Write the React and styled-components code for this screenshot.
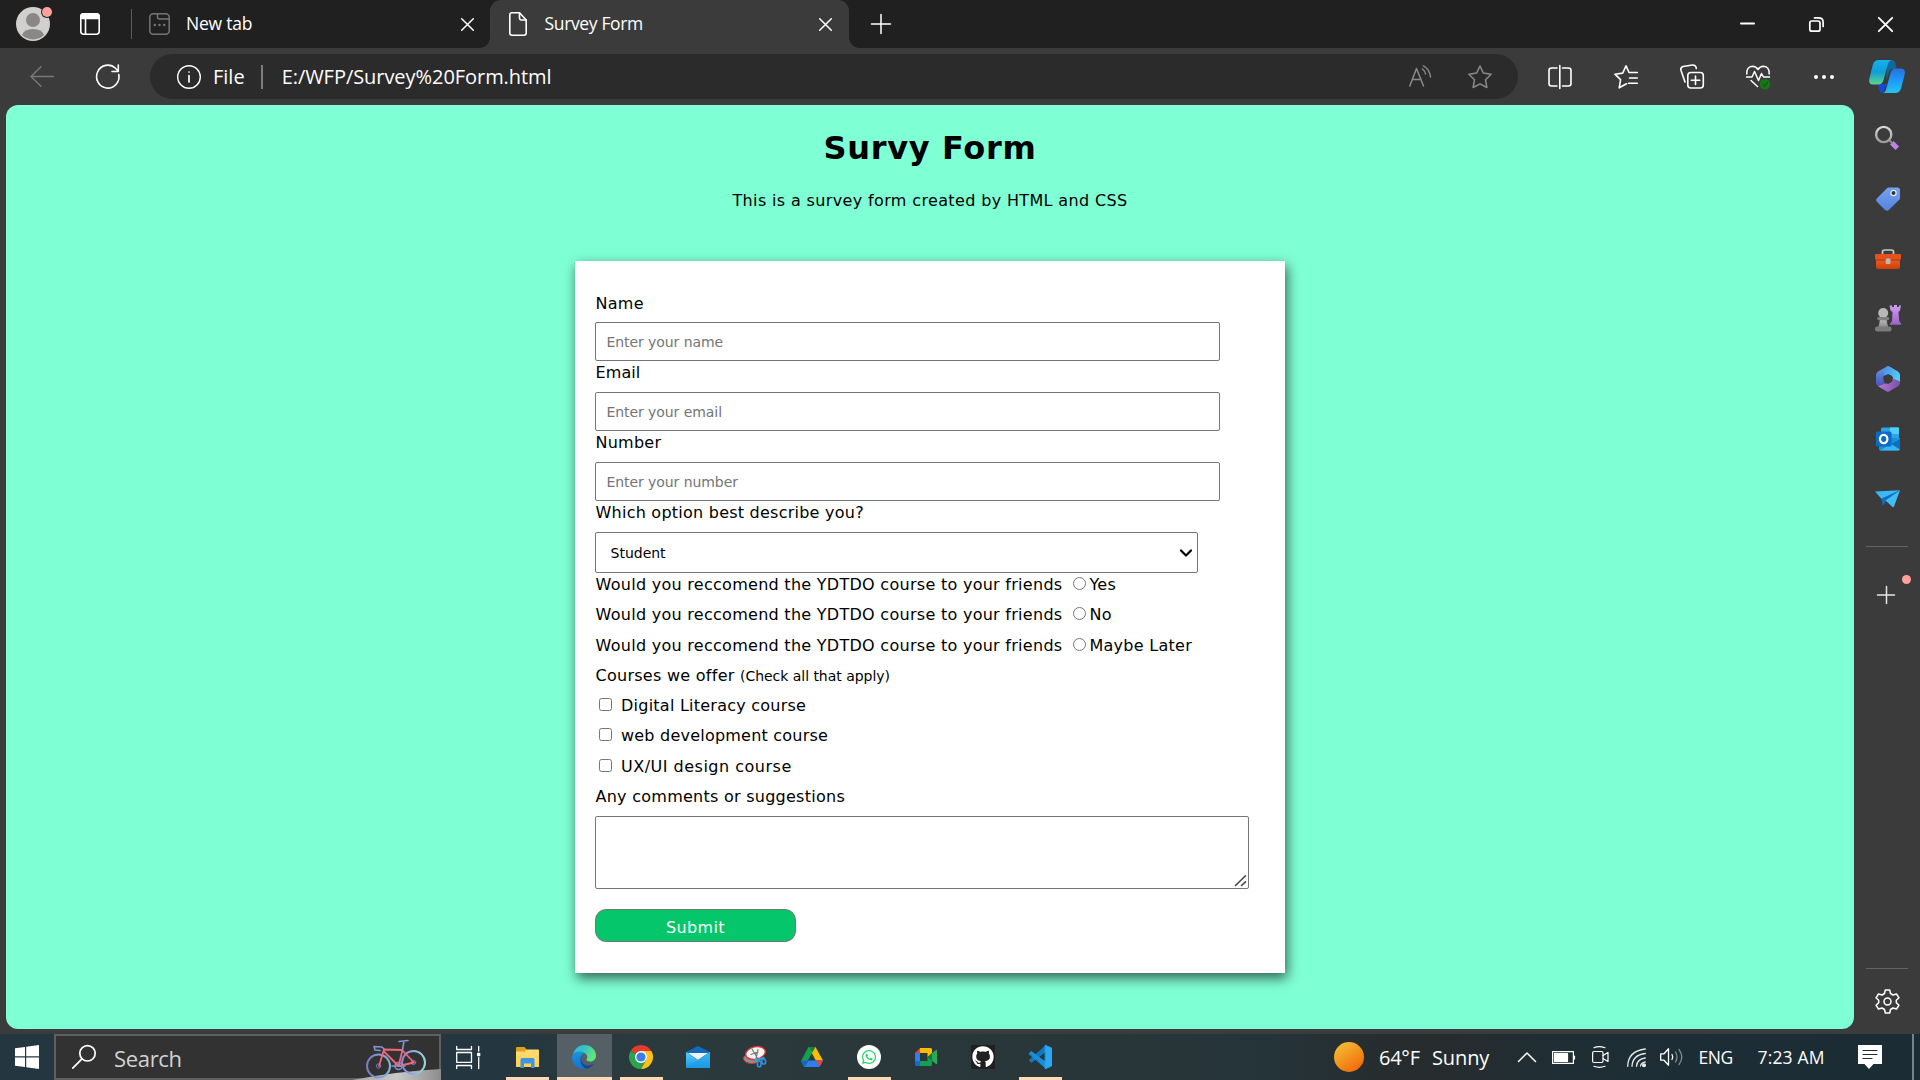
import React from "react";
import styled, { createGlobalStyle, css } from "styled-components";
import { FaGithub, FaWhatsapp } from "react-icons/fa";

const Global = createGlobalStyle`
  * { box-sizing: border-box; }
  body { margin: 0; background: #3b3b3b; overflow: hidden; }
`;

const UI = '"Open Sans", "Noto Sans", sans-serif';
const FORM = '"DejaVu Sans", sans-serif';

const Screen = styled.div`
  display: flex;
  flex-direction: column;
  width: 1920px;
  height: 1080px;
  background: #3b3b3b;
  font-family: ${UI};
  color: #fff;
`;
const Glyph = styled.svg`
  display: block;
  flex: none;
  width: ${(p) => p.$w}px;
  height: ${(p) => p.$h || p.$w}px;
  margin-left: ${(p) => p.$ml || 0}px;
  margin-top: ${(p) => p.$mt || 0}px;
  overflow: visible;
  fill: none;
  stroke-linecap: round;
  stroke-linejoin: round;
`;
const Txt = styled.span`
  flex: none;
  white-space: pre;
  width: ${(p) => (p.$w ? `${p.$w}px` : "auto")};
  font-size: ${(p) => p.$size}px;
  letter-spacing: ${(p) => p.$ls || 0}px;
  margin-left: ${(p) => p.$ml || 0}px;
  margin-top: ${(p) => p.$mt || 0}px;
  color: ${(p) => p.$c || "#fff"};
  line-height: 1.3;
`;
const Spacer = styled.div`
  flex: 1;
`;

/* ---------- tab strip ---------- */
const TabStrip = styled.div`
  display: flex;
  height: 48px;
  background: #202020;
`;
const StripTools = styled.div`
  display: flex;
  align-items: center;
  width: 132px;
  padding-left: 16px;
`;
const Divider = styled.div`
  flex: none;
  width: ${(p) => p.$w || 1}px;
  height: ${(p) => p.$h}px;
  background: ${(p) => p.$c};
  margin-left: ${(p) => p.$ml || 0}px;
`;
const Tab = styled.div`
  position: relative;
  display: flex;
  align-items: center;
  width: ${(p) => p.$w}px;
  padding: 0 16px 0 17px;
  ${(p) =>
    p.$active &&
    css`
      padding: 0 17px 0 19px;
      background: #3b3b3b;
      border-radius: 11px 11px 0 0;
      &::before,
      &::after {
        content: "";
        position: absolute;
        bottom: 0;
        width: 10px;
        height: 10px;
      }
      &::before {
        left: -10px;
        background: radial-gradient(circle at 0 0, #202020 9.5px, #3b3b3b 10px);
      }
      &::after {
        right: -10px;
        background: radial-gradient(circle at 100% 0, #202020 9.5px, #3b3b3b 10px);
      }
    `}
`;
const WindowButtons = styled.div`
  display: flex;
  align-items: center;
`;
const WinButton = styled.div`
  display: flex;
  justify-content: center;
  width: 69px;
`;

/* ---------- toolbar ---------- */
const Toolbar = styled.div`
  display: flex;
  align-items: center;
  height: 57px;
  padding-left: 30px;
`;
const Address = styled.div`
  display: flex;
  align-items: center;
  width: 1368px;
  height: 45px;
  margin-left: 30px;
  padding: 0 26px 0 27px;
  border-radius: 23px;
  background: #2b2b2b;
`;

/* ---------- body ---------- */
const Body = styled.div`
  display: flex;
  height: 929px;
  padding: 0 0 0 6px;
`;
const Page = styled.main`
  display: flex;
  flex-direction: column;
  align-items: center;
  width: 1848px;
  height: 924px;
  border-radius: 12px;
  background: #7fffd4;
  color: #000;
  font-family: ${FORM};
`;
const Title = styled.h1`
  margin: 24px 0 0;
  font-size: 32px;
  line-height: 38px;
  letter-spacing: 0.7px;
`;
const Intro = styled.p`
  margin: 24px 0 0;
  font-size: 16px;
  line-height: 20px;
  letter-spacing: 0.36px;
`;
const Card = styled.form`
  display: flex;
  flex-direction: column;
  align-items: flex-start;
  width: 710px;
  height: 712px;
  margin-top: 50px;
  padding: 31px 20px 0;
  background: #fff;
  box-shadow: 2px 5px 12px rgba(0, 0, 0, 0.62);
`;
const Label = styled.label`
  padding-bottom: ${(p) => p.$gap || 8}px;
  padding-left: 0.5px;
  font-size: 16px;
  line-height: 23px;
  letter-spacing: ${(p) => p.$ls || 0.25}px;
`;
const Field = styled.input`
  width: 625px;
  height: 39px;
  padding: 0 10.5px;
  border: 1px solid #767676;
  border-radius: 2px;
  font: 14px ${FORM};
  letter-spacing: -0.07px;
  &::placeholder {
    color: #757575;
  }
`;
const Overlaid = styled.div`
  position: relative;
  display: flex;
`;
const Caret = styled(Glyph)`
  position: absolute;
  right: 6.5px;
  top: 18px;
`;
const Grip = styled(Glyph)`
  position: absolute;
  right: 3px;
  bottom: 3px;
`;
const Choice = styled.select`
  width: 603px;
  height: 41px;
  padding: 0 4px 0 14.5px;
  appearance: none;
  border: 1px solid #767676;
  border-radius: 2px;
  background: #fff;
  color: #000;
  font: 14px ${FORM};
`;
const Row = styled.div`
  display: flex;
  height: 30.25px;
  padding-left: 0.5px;
  font-size: 16px;
  line-height: 23.5px;
  letter-spacing: ${(p) => p.$ls || 0.28}px;
  white-space: pre;
`;
const Hint = styled.span`
  font-size: 14px;
  letter-spacing: -0.03px;
  padding-top: 1px;
`;
const Radio = styled.input`
  width: 13px;
  height: 13px;
  margin: 4px 3px 0 11px;
`;
const Check = styled.input`
  width: 13px;
  height: 13px;
  margin: 4px 9px 0 3.5px;
`;
const Comments = styled.textarea`
  width: 654px;
  height: 73px;
  margin-top: 1px;
  border: 1px solid #767676;
  border-radius: 2px;
  resize: none;
`;
const Submit = styled.button`
  width: 201px;
  height: 33px;
  margin-top: 20px;
  padding: 3px 0 0;
  border: 1px solid #767676;
  border-radius: 11px;
  background: #06c66b;
  color: #fff;
  font: 16px ${FORM};
  letter-spacing: 0.35px;
`;

const Sidebar = styled.aside`
  display: flex;
  flex-direction: column;
  width: 66px;
  padding-left: 12px;
`;
const Rule = styled.div`
  flex: none;
  width: 42px;
  height: 1px;
  margin-top: ${(p) => p.$mt}px;
  background: #636363;
`;

/* ---------- taskbar ---------- */
const Taskbar = styled.footer`
  display: flex;
  align-items: center;
  height: 46px;
  background: linear-gradient(90deg, #24363f 0, #24363f 500px, #2b3a3d 640px, #293639 1100px, #25343a 1270px, #262e30 1360px, #272c2d 1430px, #1f2e35 1560px, #1b2c35 1920px);
`;
const Start = styled.div`
  display: flex;
  align-items: center;
  justify-content: center;
  width: 54px;
`;
const SearchBox = styled.div`
  display: flex;
  align-items: center;
  width: 387px;
  height: 46px;
  padding-left: 16px;
  border: 2px solid #5f5f5f;
  background: #323232;
`;
const Apps = styled.div`
  display: flex;
  gap: 2px;
  margin-left: 20px;
`;
const AppCell = styled.div`
  display: flex;
  flex-direction: column;
  align-items: center;
  width: 55px;
  height: 46px;
  background: ${(p) => (p.$active ? "#546066" : "transparent")};
`;
const AppIcon = styled.div`
  display: flex;
  align-items: center;
  justify-content: center;
  height: 43px;
  padding: 3px 1px 0 0;
`;
const Underline = styled.div`
  width: ${(p) => p.$w}px;
  height: 3px;
  background: #ffd9b3;
`;
const GithubTile = styled.div`
  display: flex;
  width: 24px;
  height: 24px;
  align-items: center;
  justify-content: center;
  background: #211f1f;
`;
const WhatsTile = styled(GithubTile)`
  border-radius: 50%;
  background: #fff;
  color: #25d366;
`;
const Tray = styled.div`
  display: flex;
  align-items: center;
  width: 586px;
  height: 46px;
`;

const X = ({ s = 13, w = 1.5 }) => (
  <Glyph $w={s} $mt={1} viewBox="0 0 13 13" stroke="#fff" strokeWidth={w}>
    <path d="M.7 .7 12.3 12.3M12.3 .7 .7 12.3" />
  </Glyph>
);

const Grad = ({ id, a, b, c, x = 0, y = 1 }) => (
  <linearGradient id={id} x1="0" y1="0" x2={x} y2={y}>
    <stop stopColor={a} />
    {c && <stop offset=".5" stopColor={c} />}
    <stop offset="1" stopColor={b} />
  </linearGradient>
);

const Bike = () => (
  <Glyph $w={91} $h={42} viewBox="348 1036 91 42">
    <defs>
      <Grad id="w1" x={1} y={0} a="#8079c8" b="#83b7d8" />
      <Grad id="w2" x={1} y={0} a="#8a87d2" b="#96d8df" />
      <Grad id="hill" x={1} y={0} a="#a5a5a5" c="#c9c9c9" b="#8d8d8d" />
    </defs>
    <path d="M352 1080Q400 1071 441 1069V1080Z" fill="url(#hill)" />
    <circle cx="378.500" cy="1066" r="11.500" stroke="url(#w1)" strokeWidth="2" />
    <circle cx="413.500" cy="1062.500" r="11.500" stroke="url(#w2)" strokeWidth="2" />
    <circle cx="378.500" cy="1066" r="2.200" stroke="#7276b8" />
    <circle cx="413.500" cy="1062.500" r="2.200" stroke="#7276b8" />
    <circle cx="398.500" cy="1066" r="3.500" stroke="#7d8bc8" strokeWidth="1.500" />
    <path d="M379 1066 384 1049.500M384.500 1052 398.500 1066 414 1062.500 402 1050 384 1049.500M398.500 1066 402.500 1050" stroke="#f2667a" strokeWidth="1.800" />
    <path d="M402.500 1050 404 1041M399 1041.500 408 1040.500M384 1049 382 1047 374 1046.500 375 1050 380 1050.500M392 1066H405" stroke="#8a93cf" strokeWidth="1.600" />
  </Glyph>
);

const Explorer = () => (
  <Glyph $w={23} $h={21} viewBox="0 0 23 21">
    <defs><Grad id="ex" a="#ffdd73" b="#ffcf52" /></defs>
    <path d="M0 1Q0 0 1 0H8.500L11 3 8 5H0Z" fill="#e0a11b" />
    <path d="M0 4.500H8.500L10.500 2.500H22Q23 2.500 23 3.500V20H0Z" fill="url(#ex)" />
    <path d="M4.500 21V12.500Q4.500 11 6 11H17Q18.500 11 18.500 12.500V21H15V16.500H8V21Z" fill="#3c97e0" />
  </Glyph>
);
const EdgeLogo = () => (
  <Glyph $w={24} viewBox="0 0 24 24">
    <defs>
      <Grad id="e1" x={1} y={0.4} a="#2fb6ec" c="#35c4c0" b="#62e578" />
      <Grad id="e2" a="#1b93dc" b="#1573cf" />
    </defs>
    <path d="M1 11C1.500 4.500 6.500 0 12.300 0 19 0 24 5 24 10.500 24 14.500 21 16.500 18 16.500 15.500 16.500 14.300 15.500 14.300 14.800 14.300 14 15.300 13.800 15.300 12 15.300 9.500 12.500 7 8.500 7 4.500 7 1.500 9 1 11Z" fill="url(#e1)" />
    <path d="M9.500 11C8 15.500 11 20.500 16 20.500 19 20.500 21 19.300 22.300 18.300 20 22 16.500 24 12.500 24 9 23.500 7 19 7.300 15.500 7.500 13 8.500 12 9.500 11Z" fill="#114a93" />
    <path d="M0 12C.5 8.500 4 6.500 7.500 6.500 10.500 6.500 13 7.800 13.500 8.500 10 8 8.500 10.500 8.500 14 8.500 19 11 22.500 14.500 23.700 9 24.800 5 23 2.500 19.500 .8 17.500 -.2 15 0 12Z" fill="url(#e2)" />
  </Glyph>
);
const Chrome = () => (
  <Glyph $w={24} viewBox="0 0 24 24">
    <path d="M12 12 1.600 6A12 12 0 0 1 22.400 6Z" fill="#e33b2e" />
    <path d="M1.600 6A12 12 0 0 0 12 24L17.200 15 12 12Z" fill="#2ba24c" />
    <path d="M12 6H22.400A12 12 0 0 1 12 24L17.200 15Z" fill="#fbc116" />
    <circle cx="12" cy="12" r="6" fill="#fff" />
    <circle cx="12" cy="12" r="4.600" fill="#3b7de9" />
  </Glyph>
);
const Mail = () => (
  <Glyph $w={24} $h={22} viewBox="0 0 24 22">
    <defs><Grad id="ml" a="#5bd0fa" b="#1a97e3" /></defs>
    <path d="M0 6 12 0 24 6V10H0Z" fill="#0f6cbd" />
    <path d="M2 7H22L12 14Z" fill="#f1f1f1" />
    <path d="M0 6 12 14 24 6V22H0Z" fill="url(#ml)" />
    <path d="M0 22 12 14 24 6V22Z" fill="#1b9be6" opacity=".5" />
  </Glyph>
);
const Snip = () => (
  <Glyph $w={24} $h={22} viewBox="0 0 24 22">
    <ellipse cx="9" cy="12.500" rx="8.500" ry="5" fill="#8f8f8f" stroke="#cf3a3a" />
    <ellipse cx="12.500" cy="7" rx="10" ry="6.200" fill="#f4f4f4" stroke="#d93535" strokeWidth="1.400" transform="rotate(-12 12.500 7)" />
    <path d="M9 3 15 13M15 3.500 13 13M8 8.500 15 6" stroke="#777" strokeWidth="1.200" />
    <path d="M12 14 17 13 21 12" stroke="#3c96d8" strokeWidth="2" />
    <ellipse cx="16.200" cy="18" rx="1.800" ry="3" stroke="#2f8fd8" strokeWidth="1.700" />
    <ellipse cx="20.700" cy="15.500" rx="2" ry="2.500" stroke="#2f8fd8" strokeWidth="1.700" />
  </Glyph>
);
const Drive = () => (
  <Glyph $w={22} $h={20} viewBox="0 0 22 20">
    <path d="M7.500 0 11 6 3.500 20Q3 20 2.500 19L0 14Z" fill="#13a050" />
    <path d="M7.500 0H14.500L22 13.500H14.800Z" fill="#fbbc09" />
    <path d="M7.300 13.500H22L19 19Q18.500 20 17.500 20H3.500Z" fill="#2f7df0" />
    <path d="M14.800 13.500H22L18.800 19.500Z" fill="#e94335" />
    <path d="M7.300 13.500H0L3.200 19.500Z" fill="#1a62cf" />
    <path d="M7.500 0H14.500L11 6Z" fill="#0d8539" />
  </Glyph>
);
const Meet = () => (
  <Glyph $w={22} $h={18} viewBox="0 0 22 18">
    <path d="M5 0V5H0Z" fill="#e94335" />
    <path d="M0 5H5V13H0Z" fill="#2f7df0" />
    <path d="M0 13H5V18H1.500Q0 18 0 16.500Z" fill="#1a66d6" />
    <path d="M5 0H15.500Q17 0 17 1.500V6.500L12.500 9V5H5Z" fill="#fbbc09" />
    <path d="M5 13H12.500V9L17 11.500V16.500Q17 18 15.500 18H5Z" fill="#13a050" />
    <path d="M12.500 9 21 2Q22 1.500 22 2.500V15.500Q22 16.500 21 16Z" fill="#2aa952" />
    <path d="M12.500 9 17 5V13Z" fill="#0d7a35" />
  </Glyph>
);
const Code = () => (
  <Glyph $w={24} viewBox="0 0 24 24">
    <path d="M18 .5 1.200 15.200 3.300 17.500 18.500 6Z" fill="#1277bd" stroke="#1277bd" />
    <path d="M1.200 8.500 3.300 6.500 18.500 17.800V23.500Z" fill="#188fda" stroke="#188fda" />
    <path d="M17.500 .5 23.500 3V21L17.500 23.500Z" fill="#29a8f3" stroke="#29a8f3" />
  </Glyph>
);

const apps = [
  { id: "files", icon: <Explorer />, line: 43 },
  { id: "edge", icon: <EdgeLogo />, line: 55, active: true },
  { id: "chrome", icon: <Chrome />, line: 43 },
  { id: "mail", icon: <Mail /> },
  { id: "snip", icon: <Snip /> },
  { id: "drive", icon: <Drive /> },
  { id: "whatsapp", icon: <WhatsTile><FaWhatsapp size={16} /></WhatsTile>, line: 43 },
  { id: "meet", icon: <Meet /> },
  { id: "github", icon: <GithubTile><FaGithub size={22} /></GithubTile> },
  { id: "code", icon: <Code />, line: 43 },
];
const questions = ["Yes", "No", "Maybe Later"];
const courses = [
  { name: "Digital Literacy course", ls: 0.24 },
  { name: "web development course", ls: 0.22 },
  { name: "UX/UI design course", ls: 0.5 },
];

export default function App() {
  return (
    <Screen>
      <Global />
      <TabStrip>
        <StripTools>
          <Glyph $w={34} viewBox="0 0 34 34">
            <circle cx="17" cy="17" r="17" fill="#d2d0ce" />
            <circle cx="17" cy="13" r="7" fill="#8a8886" />
            <path d="M6 28Q8 22 17 22T28 28A16 16 0 0 1 6 28Z" fill="#8a8886" />
            <circle cx="31" cy="5" r="6" fill="#202020" />
            <circle cx="31" cy="5" r="5" fill="#ffa29b" />
          </Glyph>
          <Glyph $w={20} $h={22} $ml={30} viewBox="0 0 20 22" stroke="#fff" strokeWidth="1.600">
            <rect x=".8" y=".8" width="18.400" height="20.400" rx="3" />
            <path d="M1 5.500V3Q1 1 3 1H17Q19 1 19 3V5.500Z" fill="#fff" />
            <path d="M5.500 6V21" />
          </Glyph>
          <Divider $h={30} $c="#5a5a5a" $ml={31} />
        </StripTools>
        <Tab $w={358}>
          <Glyph $w={21} $h={22} viewBox="0 0 21 22" stroke="#757575" strokeWidth="1.500">
            <rect x=".8" y=".8" width="19.400" height="20.400" rx="3.500" />
            <path d="M8.500 1V4Q8.500 6 10.500 6H20" />
            <path d="M5.800 12h.01M10.500 12h.01M15.200 12h.01" strokeWidth="2.400" />
          </Glyph>
          <Txt $size={17.5} $ml={16} $mt={-2} $ls={-0.22}>New tab</Txt>
          <Spacer />
          <X />
        </Tab>
        <Tab $w={359} $active>
          <Glyph $w={18} $h={24} viewBox="0 0 18 24" stroke="#fff" strokeWidth="1.600">
            <path d="M10.500 .8H3Q.8 .8 .8 3V21Q.8 23.200 3 23.200H15Q17.200 23.200 17.200 21V8Z" />
            <path d="M10.500 1V6Q10.500 8 12.500 8H17" />
          </Glyph>
          <Txt $size={17.5} $ml={17.5} $mt={-2} $ls={-0.35}>Survey Form</Txt>
          <Spacer />
          <X />
        </Tab>
        <WindowButtons>
          <Glyph $w={20} $ml={22} viewBox="0 0 20 20" stroke="#fff" strokeWidth="1.500">
            <path d="M10 .5V19.500M.5 10H19.500" />
          </Glyph>
        </WindowButtons>
        <Spacer />
        <WindowButtons>
          <WinButton>
            <Glyph $w={15} viewBox="0 0 15 15" stroke="#fff" strokeWidth="2">
              <path d="M1 6.500H14" />
            </Glyph>
          </WinButton>
          <WinButton>
            <Glyph $w={15} viewBox="0 0 15 15" stroke="#fff" strokeWidth="1.700">
              <rect x=".8" y="4" width="10.200" height="10.200" rx="2" />
              <path d="M5.500 .9H9.500Q14.100 .9 14.100 5V9.500" />
            </Glyph>
          </WinButton>
          <WinButton><X s={15} w={1.6} /></WinButton>
        </WindowButtons>
      </TabStrip>

      <Toolbar>
        <Glyph $w={24} $h={21} $mt={-1} viewBox="0 0 24 21" stroke="#777" strokeWidth="1.500">
          <path d="M23.500 10.500H1M11 .8 1 10.500 11 20.200" />
        </Glyph>
        <Glyph $w={24} $h={25} $ml={42} viewBox="0 0 24 25" stroke="#fff" strokeWidth="1.600">
          <path d="M22.800 10.500A11.200 11.500 0 1 1 19.500 4.300L22 7M22.300 1V7.500H16" />
        </Glyph>
        <Address>
          <Glyph $w={24} viewBox="0 0 24 24" stroke="#fff" strokeWidth="1.400">
            <circle cx="12" cy="12" r="11.300" />
            <path d="M12 10.500V17M12 7h.01" strokeWidth="1.700" />
          </Glyph>
          <Txt $size={20} $ml={12}>File</Txt>
          <Divider $w={2} $h={24} $c="#7d7d7d" $ml={16} />
          <Txt $size={20} $ml={19} $ls={-0.05}>E:/WFP/Survey%20Form.html</Txt>
          <Spacer />
          <Glyph $w={22} $mt={-2} viewBox="0 0 22 22" stroke="#8a8a8a" strokeWidth="1.500">
            <path d="M.8 21 7.500 3.500 14.500 21M3.500 14.500H11.800M13.500 4Q16 6 16.500 9M14.500 .8Q20.500 4 21.500 12" />
          </Glyph>
          <Glyph $w={24} $ml={37} viewBox="0 0 24 24" stroke="#8a8a8a" strokeWidth="1.500">
            <path d="M12 1 15.400 8.100 23.200 9.200 17.500 14.700 18.900 22.500 12 18.800 5.100 22.500 6.500 14.700 .8 9.200 8.600 8.100Z" />
          </Glyph>
        </Address>
        <Glyph $w={24} $ml={29.5} viewBox="0 0 24 24" stroke="#fff" strokeWidth="1.600">
          <path d="M9 3H3.500Q1 3 1 5.500V18.500Q1 21 3.500 21H9M14.500 3H20.500Q23 3 23 5.500V18.500Q23 21 20.500 21H14.500M11.800 .5V23.500" />
        </Glyph>
        <Glyph $w={24} $ml={42.5} viewBox="0 0 24 24" stroke="#fff" strokeWidth="1.600">
          <path d="M12.500 18.800 5.200 22.800 6.600 14.700 .9 9.200 8.700 8.100 12 .9 15 7.500H23.300M15.500 13H23.300M14.500 18.300H23.300" />
        </Glyph>
        <Glyph $w={24} $h={25} $ml={42} viewBox="0 0 24 25" stroke="#fff" strokeWidth="1.600">
          <rect x="7.800" y="8.500" width="15.500" height="15.500" rx="3" />
          <path d="M15.500 12V20.500M11.300 16.200H19.800M5 18 1 6.500Q.2 3.500 3 2.500L12.500 1Q15 .8 16 3L16.300 4.500" />
        </Glyph>
        <Glyph $w={24} $h={24} $ml={42} viewBox="0 0 24 24" stroke="#fff" strokeWidth="1.500">
          <path d="M.8 9Q.5 1.500 6.500 1.300 10 1.300 12 4.500 14 1.300 17.500 1.300 23.500 1.500 23.200 9M.5 12H6L8.500 6.500 12.500 15.500 15.500 8.500 17.500 12H23.500M5 15.500 11.500 21.500" />
          <circle cx="19" cy="19.200" r="5.300" fill="#0f7b0f" stroke="none" />
          <path d="M16.800 19.500 18.400 21 21.500 17.500" stroke="#3b3b3b" strokeWidth="1.200" />
        </Glyph>
        <Glyph $w={20} $h={4} $ml={44} viewBox="0 0 20 4">
          <circle cx="2" cy="2" r="2" fill="#fff" />
          <circle cx="10" cy="2" r="2" fill="#fff" />
          <circle cx="18" cy="2" r="2" fill="#fff" />
        </Glyph>
        <Glyph $w={36} $h={33} $ml={35} viewBox="0 0 36 33">
          <defs>
            <Grad id="c1" a="#16b1ea" c="#0f9fd8" b="#5fd58c" />
            <Grad id="c2" a="#2a6fdc" c="#1b9bff" b="#25c4ea" />
          </defs>
          <path d="M18 0H22Q25.500 0 26.500 4L27.500 9H24Q21 9 20 12L17.500 20Z" fill="#0d6a9c" />
          <path d="M9 24H18L14 33H14.500Q11 33 10 29Z" fill="#1648d8" />
          <path d="M10 0H23Q20 0 18.700 5L14.500 20Q13.300 24.500 9 24.500H4Q-1 24.500 .4 18.500L3.800 5Q5 0 10 0Z" fill="url(#c1)" />
          <path d="M26 33H13.500Q16.500 33 17.500 28L21.500 13Q22.700 8.500 27 8.500H32Q37 8.500 35.600 14.500L32.200 28Q31 33 26 33Z" fill="url(#c2)" />
        </Glyph>
      </Toolbar>

      <Body>
        <Page>
          <Title>Survy Form</Title>
          <Intro>This is a survey form created by HTML and CSS</Intro>
          <Card>
            <Label $gap={7} $ls={0.3}>Name</Label>
            <Field placeholder="Enter your name" />
            <Label $ls={0.1}>Email</Label>
            <Field placeholder="Enter your email" />
            <Label $ls={0.25}>Number</Label>
            <Field placeholder="Enter your number" />
            <Label $ls={0.24}>Which option best describe you?</Label>
            <Overlaid>
              <Choice><option>Student</option></Choice>
              <Caret $w={12} $h={6} viewBox="0 0 12 6" stroke="#000" strokeWidth="2.200">
                <path d="M1 .5 6 5.500 11 .5" />
              </Caret>
            </Overlaid>
            {questions.map((q) => (
              <Row key={q}>
                Would you reccomend the YDTDO course to your friends
                <Radio type="radio" name="recommend" />
                {q}
              </Row>
            ))}
            <Row $ls={0.27}>{"Courses we offer "}<Hint>(Check all that apply)</Hint></Row>
            {courses.map((c) => (
              <Row key={c.name} $ls={c.ls}><Check type="checkbox" />{c.name}</Row>
            ))}
            <Row $ls={0.26}>Any comments or suggestions</Row>
            <Overlaid>
              <Comments />
              <Grip $w={12} $h={11} viewBox="0 0 12 11" stroke="#444" strokeWidth="1.600">
                <path d="M1.500 10.500 11.500 .8M7.500 10.500 11.500 6.800" />
              </Grip>
            </Overlaid>
            <Submit type="button">Submit</Submit>
          </Card>
        </Page>

        <Sidebar>
          <Glyph $w={24} $ml={9} $mt={21} viewBox="0 0 24 24">
            <defs><Grad id="s1" a="#d8d8d8" b="#9b9b9b" /></defs>
            <path d="M16.800 16.800 22.300 22.300" stroke="#bd84e8" strokeWidth="5" strokeLinecap="butt" />
            <path d="M14.500 14.500 16.500 16.500" stroke="#8d8d8d" strokeWidth="2" />
            <circle cx="8.700" cy="8.500" r="7.600" stroke="url(#s1)" strokeWidth="2.400" />
          </Glyph>
          <Glyph $w={24} $ml={10} $mt={37} viewBox="0 0 24 24">
            <defs><Grad id="s2" a="#76a3ee" b="#5583dd" /></defs>
            <path d="M12.500 .5H21.500Q24 .5 24 3V12L12.500 23.200Q10.700 24.500 9 23L.8 14.800Q-.5 13 .8 11.500L11 1.200Z" fill="url(#s2)" />
            <circle cx="17.500" cy="6" r="2.600" fill="#333" stroke="#dbe8ff" strokeWidth="1.300" />
          </Glyph>
          <Glyph $w={26} $h={20} $ml={9} $mt={38} viewBox="0 0 26 20">
            <defs><Grad id="s3" a="#f1622a" b="#d13d06" /></defs>
            <path d="M7.500 6V3Q7.500 1 9.500 1H16.500Q18.500 1 18.500 3V6" stroke="#c9c9c9" strokeWidth="1.700" />
            <path d="M1 9H25V18Q25 20 23 20H3Q1 20 1 18Z" fill="url(#s3)" />
            <path d="M0 6Q0 5 1 5H25Q26 5 26 6V9.500Q26 10.500 25 10.500H1Q0 10.500 0 9.500Z" fill="#e5501b" />
            <path d="M1 11H25" stroke="#b53405" />
            <rect x="10.700" y="9.500" width="4.800" height="5.500" rx="1" fill="#b9b9b9" />
          </Glyph>
          <Glyph $w={26} $h={27} $ml={9} $mt={36} viewBox="0 0 26 27">
            <defs>
              <Grad id="s4" a="#c9c9c9" b="#8c8c8c" />
              <Grad id="s5" a="#cf9df0" b="#9b62c9" />
            </defs>
            <path d="M14.500 .5H17V2H19V0H22V2H24V.5H26L25 5.500 23.500 7 24.200 16 26 18.500V19.800H14.500L17 16 17.500 7 15.500 5.500Z" fill="url(#s5)" />
            <path d="M5.500 12H11L13 22H3.500Z" fill="url(#s4)" />
            <circle cx="8.200" cy="8" r="5" fill="#b8b8b8" />
            <rect x="2.200" y="12" width="12" height="3.200" rx="1.600" fill="#818181" />
            <rect x="0" y="21.500" width="16.500" height="5" rx="2" fill="#7c7c7c" />
          </Glyph>
          <Glyph $w={24} $h={26} $ml={10} $mt={34} viewBox="0 0 24 26">
            <defs>
              <Grad id="m1" a="#6b9be8" b="#4b52b8" />
              <Grad id="m2" x={1} y={0.5} a="#4b8de8" b="#53ccf5" />
              <Grad id="m3" x={1} y={0} a="#b878d8" b="#7b4fa8" />
            </defs>
            <path d="M12 0 2 5.500Q0 7 0 9V17Q0 19 2 20.200L9 17.500Q7.500 16 7.500 13V10L15 6V1.500Z" fill="url(#m1)" />
            <path d="M12 0Q13.500 .2 22 5.500 24 7 24 9V16L17 13Q17 9 12.500 8.500L8 9.500V3Z" fill="url(#m2)" />
            <path d="M24 15.500V17Q24 19 22 20.200L13.500 25.300Q12 26.300 10.500 25.300L2 20.200 9 17.500 12 17.500Q16 17 16.500 12.500Z" fill="url(#m3)" />
            <path d="M8.500 10.500 12 8.600 15.800 10.800V15.200L12 17.400 8.500 15.200Z" fill="#3b3b3b" stroke="#3b3b3b" />
          </Glyph>
          <Glyph $w={24} $h={24} $ml={10} $mt={35} viewBox="0 0 24 24">
            <rect x="5" y=".5" width="18" height="14" rx="1.500" fill="#2ba5e8" />
            <path d="M14 .5H23V7H14Z" fill="#50d0f8" />
            <path d="M3 11H24V22Q24 23.500 22.500 23.500H4.500Q3 23.500 3 22Z" fill="#1490df" />
            <path d="M24 11 10 20 4 23.500H22.500L24 22Z" fill="#35b8f1" />
            <path d="M15 17 24 11.500V22.500Z" fill="#0f6fc0" />
            <rect x="0" y="4.500" width="15.500" height="15" rx="1.500" fill="#0b6bc6" />
            <ellipse cx="7.700" cy="12" rx="3.700" ry="4.100" stroke="#fff" strokeWidth="2.200" />
          </Glyph>
          <Glyph $w={25} $h={18} $ml={9} $mt={39} viewBox="0 0 25 18">
            <path d="M0 1.500 25 .3 7 9.500Z" fill="#3cb9f2" />
            <path d="M25 .3 6.500 8.500 7.500 16 11 11.500Z" fill="#0d6fc0" />
            <path d="M25 .3 10.500 10.500 17.800 17.300Q18.500 17.500 19 16.500Z" fill="#41bdf5" />
          </Glyph>
          <Rule $mt={38} />
          <Glyph $w={18} $ml={11} $mt={39} viewBox="0 0 18 18" stroke="#e6e6e6" strokeWidth="1.500">
            <path d="M9.500 .5V17.500M.5 9H17.500" />
            <circle cx="29.500" cy="-6.500" r="4.500" fill="#ffa29b" stroke="none" />
          </Glyph>
          <Rule $mt={364} />
          <Glyph $w={25} $h={25} $ml={8.5} $mt={20} viewBox="0 0 25 25" stroke="#fff" strokeWidth="1.500">
            <path d="M10.300 1H14.700L15.500 4.500 18 6 21.500 5 24 8.800 21.300 11.300V13.700L24 16.200 21.500 20 18 19 15.500 20.500 14.700 24H10.300L9.500 20.500 7 19 3.500 20 1 16.200 3.700 13.700V11.300L1 8.800 3.500 5 7 6 9.500 4.500Z" />
            <circle cx="12.500" cy="12.500" r="3.500" />
          </Glyph>
        </Sidebar>
      </Body>

      <Taskbar>
        <Start>
          <Glyph $w={24} viewBox="0 0 24 24">
            <path d="M0 3.300 10 2V11.300H0ZM11.200 1.800 24 0V11.300H11.200ZM0 12.600H10V22L0 20.700ZM11.200 12.600H24V24L11.200 22.200Z" fill="#fff" />
          </Glyph>
        </Start>
        <SearchBox>
          <Glyph $w={24} viewBox="0 0 24 24" stroke="#fff" strokeWidth="1.700">
            <circle cx="15.500" cy="8.300" r="7.700" />
            <path d="M10 13.800 .8 23.200" />
          </Glyph>
          <Txt $size={22} $ml={18} $ls={-0.33} $mt={3} $c="#d2d2d2">Search</Txt>
          <Spacer />
          <Bike />
        </SearchBox>
        <Glyph $w={24} $h={23} $ml={15} viewBox="0 0 24 23" stroke="#fff" strokeWidth="1.300">
          <path d="M.7 .5V3.500H15.500V.5M.7 22.500V19.500H15.500V22.500M22.700 .5V5M22.700 11.500V22.500" />
          <rect x=".7" y="6.500" width="14.800" height="9.800" />
          <rect x="21.700" y="7.500" width="2" height="2" fill="#fff" />
        </Glyph>
        <Apps>
          {apps.map((a) => (
            <AppCell key={a.id} $active={a.active}>
              <AppIcon>{a.icon}</AppIcon>
              {a.line && <Underline $w={a.line} />}
            </AppCell>
          ))}
        </Apps>
        <Spacer />
        <Tray>
          <Glyph $w={30} viewBox="0 0 30 30">
            <defs><Grad id="sun" x={0.7} a="#f2c73a" b="#f26a0c" c="#f29a20" /></defs>
            <circle cx="15" cy="15" r="15" fill="url(#sun)" />
          </Glyph>
          <Txt $size={20} $ml={15} $ls={-0.25} $mt={2} $w={53}>64°F</Txt>
          <Txt $size={20} $mt={2} $w={86} $ls={-0.1}>Sunny</Txt>
          <Glyph $w={18} $h={10} viewBox="0 0 18 10" stroke="#fff" strokeWidth="1.500">
            <path d="M.5 9.500 9 1 17.500 9.500" />
          </Glyph>
          <Glyph $w={23} $h={13} $ml={16} viewBox="0 0 23 13" stroke="#fff" strokeWidth="1.200">
            <path d="M.6 .6H21.400V12.400H.6ZM22.500 5V8" />
            <rect x="2.500" y="2.500" width="13" height="8" fill="#fff" />
          </Glyph>
          <Glyph $w={17} $h={22} $ml={17} viewBox="0 0 17 22" stroke="#fff" strokeWidth="1.200">
            <rect x=".6" y="5.500" width="10.400" height="11" rx="1.500" />
            <path d="M11 9.500 16 6.500V15.500L11 12.500M2 1.700Q7 -.5 13 1.700M2 20.300Q7 22.500 13 20.300" />
          </Glyph>
          <Glyph $w={19} $h={19} $ml={18} $mt={1} viewBox="0 0 19 19" stroke="#e8e8e8" strokeWidth="1.300">
            <path d="M.7 18.300Q1 3 18.300 1M5 18.300Q5.500 7 18.300 5.500M9.500 18.300Q10 11 18.300 10" />
            <path d="M13.500 18Q13.800 15 18.300 13.800" />
            <circle cx="17" cy="17.300" r="1.400" fill="#fff" />
          </Glyph>
          <Glyph $w={23} $h={18} $ml={14} viewBox="0 0 23 18" stroke="#fff" strokeWidth="1.300">
            <path d="M.7 5.800H4L8.500 .8V17.200L4 12.200H.7ZM12 6.500Q13.500 9 12 11.500" />
            <path d="M15.500 4Q18.500 9 15.500 14M19 1.500Q24.500 9 19 16.500" stroke="#7f8b90" />
          </Glyph>
          <Txt $size={17.5} $ml={15.5} $ls={-0.5} $w={59}>ENG</Txt>
          <Txt $size={17.5} $w={100.5} $ls={0.15}>7:23 AM</Txt>
          <Glyph $w={24} viewBox="0 0 24 24">
            <path d="M0 0H24V19H15.500L11 24 6.500 19H0Z" fill="#fff" />
            <path d="M5 5.500H19M5 9.500H19M5 13.500H14" stroke="#1f2e35" strokeWidth="1.200" />
          </Glyph>
          <Divider $w={2} $h={46} $c="#76838a" $ml={30} />
        </Tray>
      </Taskbar>
    </Screen>
  );
}
